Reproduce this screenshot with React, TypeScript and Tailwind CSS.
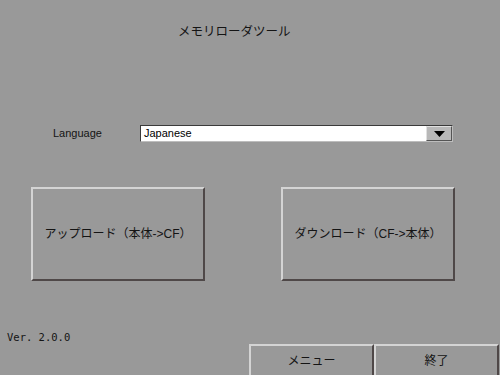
import React from "react"

const jp = { fontFamily: '"Liberation Sans", "Noto Sans CJK JP", sans-serif' }

const raised =
  "border-2 border-t-[#d4d4d4] border-l-[#d4d4d4] border-b-[#4f4848] border-r-[#4f4848]"

export default function App() {
  return (
    <div className="w-[500px] h-[375px] bg-[#999999] flex flex-col text-[#141414] overflow-hidden" style={jp}>
      <div className="pt-[24px] pl-[178px] text-[12.5px] leading-[16px]">メモリローダツール</div>

      <div className="mt-[85px] flex items-center h-[17px]">
        <span className="pl-[53px] w-[140px] text-[11px]">Language</span>
        <div className="w-[313px] h-[17px] bg-white flex items-center border border-t-[#3a3a3a] border-l-[#3a3a3a] border-b-[#bdbdbd] border-r-[#bdbdbd]">
          <span className="flex-1 pl-[3px] text-[11px] leading-[15px] text-black">Japanese</span>
          <div className="w-[26px] h-[15px] bg-[#b8b8b8] flex items-center justify-center border border-t-[#e0e0e0] border-l-[#e0e0e0] border-b-[#555555] border-r-[#555555]">
            <svg width="11" height="6" viewBox="0 0 11 6">
              <polygon points="0,0 11,0 5.5,6" fill="#000" />
            </svg>
          </div>
        </div>
      </div>

      <div className="mt-[45px] pl-[31px] flex gap-[76px]">
        <div className={`w-[174px] h-[94px] ${raised} flex items-center justify-center text-[12px]`}>
          アップロード（本体-&gt;CF）
        </div>
        <div className={`w-[174px] h-[94px] ${raised} flex items-center justify-center text-[12px]`}>
          ダウンロード（CF-&gt;本体）
        </div>
      </div>

      <div className="mt-[50px] pl-[7px] text-[10.5px] leading-[12px]" style={{ fontFamily: '"DejaVu Sans Mono", monospace' }}>
        Ver. 2.0.0
      </div>

      <div className="mt-[1px] pl-[249px] flex">
        <div className={`w-[125px] h-[34px] ${raised} flex items-center justify-center text-[12px]`}>メニュー</div>
        <div className={`w-[125px] h-[34px] ${raised} flex items-center justify-center text-[12px]`}>終了</div>
      </div>
    </div>
  )
}
